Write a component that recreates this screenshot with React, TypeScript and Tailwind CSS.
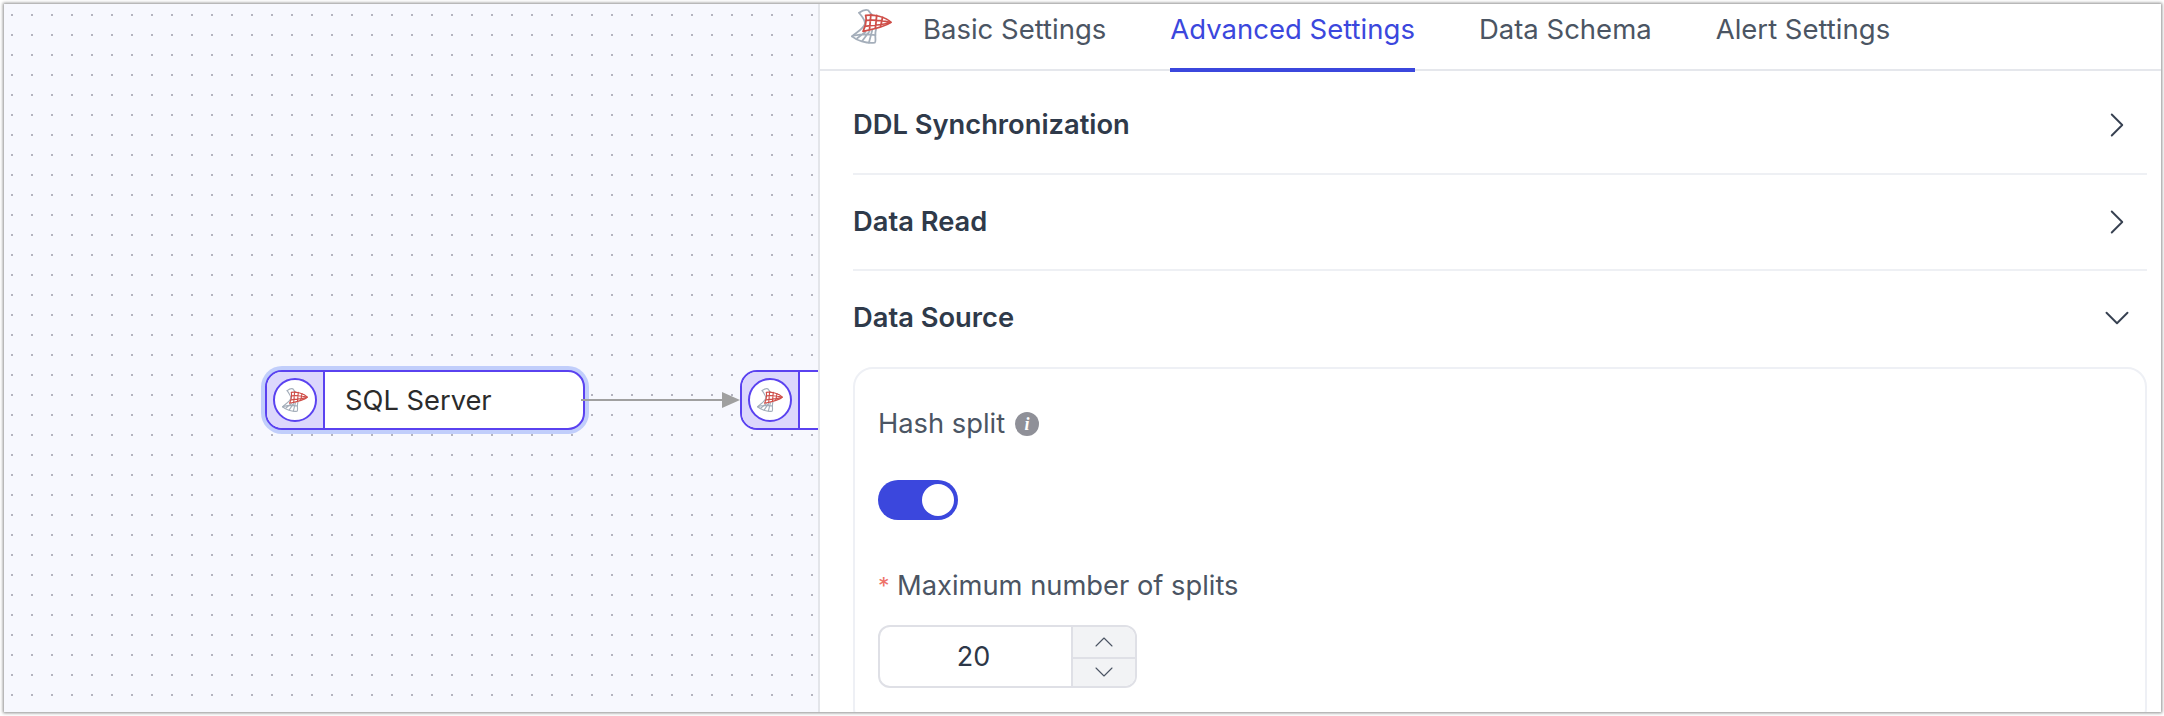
import { ChevronDown, ChevronRight, ChevronUp } from "lucide-react";

const tabs = ["Basic Settings", "Advanced Settings", "Data Schema", "Alert Settings"];

// SQL Server mark: grey twisted tower with a red fan on it
function SqlServerIcon({ className }: { className: string }) {
  return (
    <svg className={className} viewBox="33 26 126 110" preserveAspectRatio="none" fill="none" strokeLinecap="round" strokeLinejoin="round">
      <g stroke="#a4aeba" strokeWidth="5.5">
        <path d="M58 38 C66 32 78 27 86 30 C90 36 92 40 100 46" />
        <path d="M58 38 C66 50 76 58 76 72 C74 86 52 98 36 112" />
        <path d="M36 112 C50 124 80 136 106 132 C112 128 104 110 110 90" />
        <path d="M52 118 L78 98 M68 126 L90 96 M88 132 L98 94 M40 110 C60 106 86 104 108 108" />
      </g>
      <g stroke="#cf4f49" strokeWidth="5.5">
        <path d="M78 46 C100 42 140 50 156 68 C140 80 100 90 70 96 C76 84 82 64 78 46 Z" />
        <path d="M94 44 L90 90 M112 46 L108 86 M130 52 L124 80 M80 62 C104 60 130 62 154 68 M78 80 C100 78 130 76 150 70" />
      </g>
    </svg>
  );
}

function NodeBadge() {
  return (
    <div className="flex h-full w-[58px] shrink-0 items-center justify-center border-r-2 border-[#5a42f0] bg-[#dcd7fc]">
      <div className="flex h-[44px] w-[44px] items-center justify-center rounded-full border-2 border-[#5a42f0] bg-white">
        <SqlServerIcon className="h-[24px] w-[26px]" />
      </div>
    </div>
  );
}

function SectionRow({ title, open, className }: { title: string; open?: boolean; className: string }) {
  return (
    <div className={`flex items-center justify-between pr-[9px] ${className}`}>
      <span className="text-[27.3px] font-semibold text-[#2f3a4a]">{title}</span>
      <span className="flex w-[42px] justify-center">
        {open ? (
          <ChevronDown size={42} strokeWidth={1.1} className="text-[#374151]" />
        ) : (
          <ChevronRight size={42} strokeWidth={1.1} className="text-[#374151]" />
        )}
      </span>
    </div>
  );
}

export default function App() {
  return (
    <div className="h-[716px] w-[2164px] overflow-hidden bg-white pb-[4px] pl-[4px] pr-[3px] pt-[4px] font-['Inter',sans-serif]">
      <div className="flex h-full overflow-hidden shadow-[0_0_3px_1px_rgba(0,0,0,0.45)]">
        {/* Canvas */}
        <div className="relative h-full w-[814px] shrink-0 overflow-hidden bg-[#f7f8fe] bg-[radial-gradient(#b4b4bf_1.1px,transparent_1.1px)] bg-[length:20px_20px] bg-[position:-2px_1px]">
          <div className="absolute left-[261px] top-[366px] flex h-[60px] w-[320px] items-center overflow-hidden rounded-[17px] border-2 border-[#5a42f0] bg-white shadow-[0_0_0_4px_#c1cefb]">
            <NodeBadge />
            <span className="ml-[20px] pt-[2px] text-[27.3px] text-[#2b2b2b]">SQL Server</span>
          </div>

          {/* Edge between the nodes */}
          <div className="absolute left-[577px] top-[395px] h-[2px] w-[144px] bg-[#a0a0a0]" />
          <svg className="absolute left-[718px] top-[388px] h-[16px] w-[18px]" viewBox="0 0 18 16">
            <path d="M0 0 L18 8 L0 16 Z" fill="#a0a0a0" />
          </svg>

          <div className="absolute left-[736px] top-[366px] flex h-[60px] w-[320px] items-center overflow-hidden rounded-[17px] border-2 border-[#5a42f0] bg-white">
            <NodeBadge />
          </div>
        </div>

        {/* Settings panel */}
        <div className="flex h-full min-w-0 flex-1 flex-col overflow-hidden border-l-2 border-[#e3e5ea] bg-white">
          <div className="flex h-[67px] shrink-0 border-b-2 border-[#e5e7ec] pl-[31px]">
            <SqlServerIcon className="mt-[5px] h-[35px] w-[41px] shrink-0" />
            <div className="ml-[31px] flex gap-[64px]">
              {tabs.map((tab) => (
                <div
                  key={tab}
                  className={
                    tab === "Advanced Settings"
                      ? "-mb-[3px] h-[68px] border-b-4 border-[#3b47dd] pt-[8px] text-[27.5px] leading-[34px] text-[#3b47dd]"
                      : "pt-[8px] text-[27.5px] leading-[34px] text-[#4b5563]"
                  }
                >
                  {tab}
                </div>
              ))}
            </div>
          </div>

          <div className="ml-[33px] mr-[14px] flex flex-col">
            <SectionRow title="DDL Synchronization" className="h-[104px] border-b-2 border-[#eef0f4] pt-[6px]" />
            <SectionRow title="Data Read" className="h-[96px] border-b-2 border-[#eef0f4]" />
            <SectionRow title="Data Source" open className="h-[92px] pt-[2px]" />

            <div className="mt-[4px] rounded-[20px] border-2 border-[#eef0f5] pb-[38px] pl-[23px] pt-[39px]">
              <div className="flex h-[32px] items-center gap-[10px]">
                <span className="text-[27.3px] text-[#4b5563]">Hash split</span>
                <span className="flex h-[24px] w-[24px] items-center justify-center rounded-full bg-[#8f9098] font-['Liberation_Serif',serif] text-[18px] font-bold italic text-white">
                  i
                </span>
              </div>

              <div className="mt-[40px] flex h-[40px] w-[80px] items-center justify-end rounded-full bg-[#3b47dd] pr-[4px]">
                <div className="h-[32px] w-[32px] rounded-full bg-white" />
              </div>

              <div className="mt-[50px] flex h-[32px] items-center">
                <span className="w-[19px] text-[23px] text-[#ee7268]">*</span>
                <span className="text-[27.3px] text-[#4b5563]">Maximum number of splits</span>
              </div>

              <div className="mt-[23px] flex h-[63px] w-[259px] overflow-hidden rounded-[12px] border-2 border-[#dfe0e6]">
                <div className="flex flex-1 items-center justify-center pr-[4px] pt-[2px] text-[27px] text-[#2d3748]">20</div>
                <div className="flex w-[64px] flex-col border-l-2 border-[#dfe0e6] bg-[#f2f3f5]">
                  <div className="flex h-[32px] shrink-0 items-center justify-center overflow-hidden border-b-2 border-[#dfe0e6]">
                    <ChevronUp size={32} strokeWidth={0.8} className="shrink-0 text-[#4b5563]" />
                  </div>
                  <div className="flex min-h-0 flex-1 items-center justify-center overflow-hidden pb-[2px]">
                    <ChevronDown size={32} strokeWidth={0.8} className="shrink-0 text-[#4b5563]" />
                  </div>
                </div>
              </div>
            </div>
          </div>
        </div>
      </div>
    </div>
  );
}
